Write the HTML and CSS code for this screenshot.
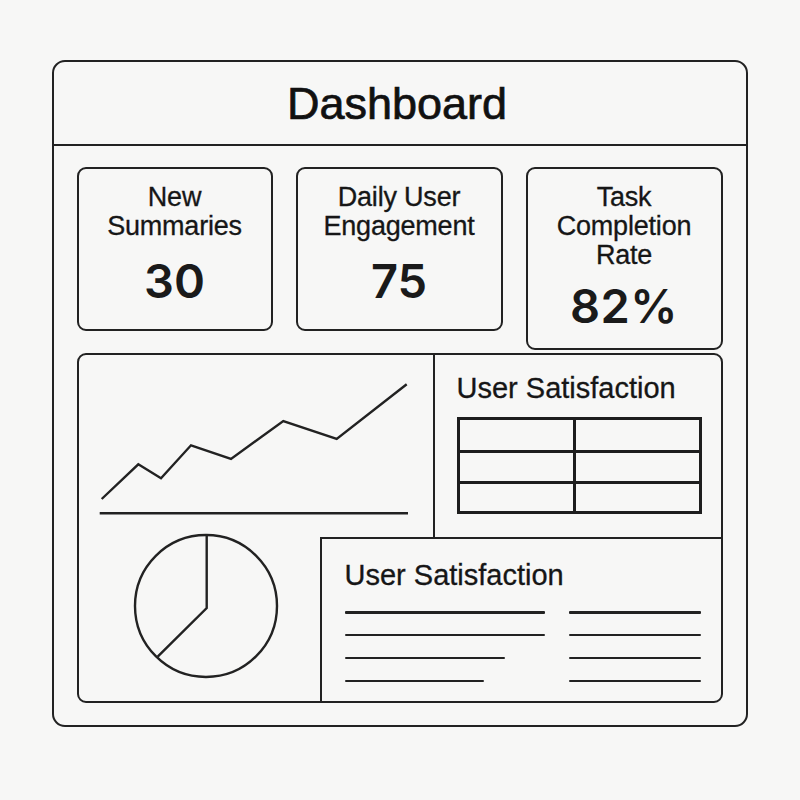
FILE: index.html
```html
<!DOCTYPE html>
<html>
<head>
<meta charset="utf-8">
<link rel="stylesheet" href="styles.css">
</head>
<body>
<div class="frame">
  <header class="head"><h1 class="title">Dashboard</h1></header>
  <div class="content">
    <div class="stats">
      <div class="card card-a">
        <div class="label">New<br>Summaries</div>
        <div class="num">30</div>
      </div>
      <div class="card card-b">
        <div class="label">Daily User<br>Engagement</div>
        <div class="num">75</div>
      </div>
      <div class="card card-c">
        <div class="label">Task<br>Completion<br>Rate</div>
        <div class="num num-c">82%</div>
      </div>
    </div>
    <div class="panel">
      <div class="cell chart">
        <svg class="svg" width="354" height="182" viewBox="79 355 354 182">
          <polyline points="101.7,499 138.3,464.3 161,478.3 191,445.3 231,459 283.3,421 336.7,439 406.7,384.3" fill="none" stroke="#222" stroke-width="2.4" stroke-linejoin="miter"/>
          <line x1="99.7" y1="513.3" x2="408" y2="513.3" stroke="#222" stroke-width="2.4"/>
        </svg>
      </div>
      <div class="cell tablecell">
        <h2 class="sub">User Satisfaction</h2>
        <table class="grid">
          <tr><td class="c1"></td><td></td></tr>
          <tr class="r2"><td class="c1"></td><td></td></tr>
          <tr class="r3"><td class="c1"></td><td></td></tr>
        </table>
      </div>
      <div class="cell pie">
        <svg class="svg" width="241" height="164" viewBox="79 537 241 164">
          <circle cx="206" cy="606" r="71" fill="none" stroke="#222" stroke-width="2.4"/>
          <polyline points="206.7,535 206.7,608 157.7,656.7" fill="none" stroke="#222" stroke-width="2.4"/>
        </svg>
      </div>
      <div class="cell textcell">
        <h2 class="sub">User Satisfaction</h2>
        <div class="lines">
          <div class="col col-left">
            <div class="ln w200"></div>
            <div class="ln w200"></div>
            <div class="ln w160"></div>
            <div class="ln w139"></div>
          </div>
          <div class="col col-right">
            <div class="ln"></div>
            <div class="ln"></div>
            <div class="ln"></div>
            <div class="ln"></div>
          </div>
        </div>
      </div>
    </div>
  </div>
</div>
</body>
</html>
```

FILE: styles.css
```css
* { box-sizing: border-box; }
html, body { margin: 0; padding: 0; }
body {
  background: #f7f7f6;
  font-family: "Liberation Sans", Arial, sans-serif;
  color: #161616;
  width: 800px;
  height: 800px;
  overflow: hidden;
}
.frame {
  margin: 60px 0 0 52px;
  width: 696px;
  height: 667px;
  border: 2.5px solid #222;
  border-radius: 13px;
}
.head {
  height: 84px;
  border-bottom: 2.5px solid #222;
  display: flex;
  align-items: center;
  justify-content: center;
}
.title {
  margin: 2px 0 0 -6px;
  font-size: 45px;
  font-weight: 400;
  line-height: 50px;
  -webkit-text-stroke: 0.7px #111;
  color: #111;
}
.content {
  padding: 21px 0 0 22.5px;
}
.stats {
  display: flex;
  align-items: flex-start;
  gap: 23px;
}
.card {
  border: 2.3px solid #222;
  border-radius: 9px;
  padding-top: 14px;
  text-align: center;
}
.card-a { width: 196px; height: 164px; }
.card-b { width: 207px; height: 164px; }
.card-c { width: 197px; height: 183px; }
.label {
  font-size: 27px;
  line-height: 29px;
  letter-spacing: -0.2px;
  -webkit-text-stroke: 0.3px #161616;
}
.num {
  font-family: Inter, "Liberation Sans", sans-serif;
  font-size: 47px;
  line-height: 56px;
  font-weight: 600;
  margin-top: 12px;
  color: #1a1a1a;
}
.num-c { margin-top: 8px; letter-spacing: 0.5px; }
.panel {
  margin-top: 3px;
  width: 646px;
  height: 350px;
  border: 2.3px solid #222;
  border-radius: 9px;
  display: grid;
  grid-template-columns: 241px 113px 1fr;
  grid-template-rows: 182px 1fr;
}
.cell { position: relative; }
.chart { grid-column: 1 / 3; grid-row: 1; }
.tablecell {
  grid-column: 3; grid-row: 1;
  border-left: 2.3px solid #222;
  padding: 17px 0 0 22px;
}
.pie { grid-column: 1; grid-row: 2; }
.textcell {
  grid-column: 2 / 4; grid-row: 2;
  border-left: 2.3px solid #222;
  border-top: 2.3px solid #222;
  padding: 20px 0 0 23px;
}
.svg { display: block; overflow: visible; }
.sub {
  margin: 0;
  font-size: 29px;
  font-weight: 400;
  line-height: 32px;
  -webkit-text-stroke: 0.3px #161616;
}
.grid {
  margin-top: 13px;
  border-collapse: collapse;
  width: 245px;
}
.grid td {
  border: 3px solid #1e1e1e;
  height: 33px;
  padding: 0;
}
.grid .r2 td { height: 31px; }
.grid .r3 td { height: 30px; }
.grid .c1 { width: 116px; }
.lines {
  display: flex;
  gap: 24px;
  margin-top: 20px;
}
.col { display: flex; flex-direction: column; gap: 20.3px; }
.ln { height: 2.6px; background: #222; border-radius: 1px; }
.col-left { width: 200px; }
.col-right { width: 132px; }
.col-right .ln { width: 132px; }
.w200 { width: 200px; }
.w160 { width: 160px; }
.w139 { width: 139px; }
```
